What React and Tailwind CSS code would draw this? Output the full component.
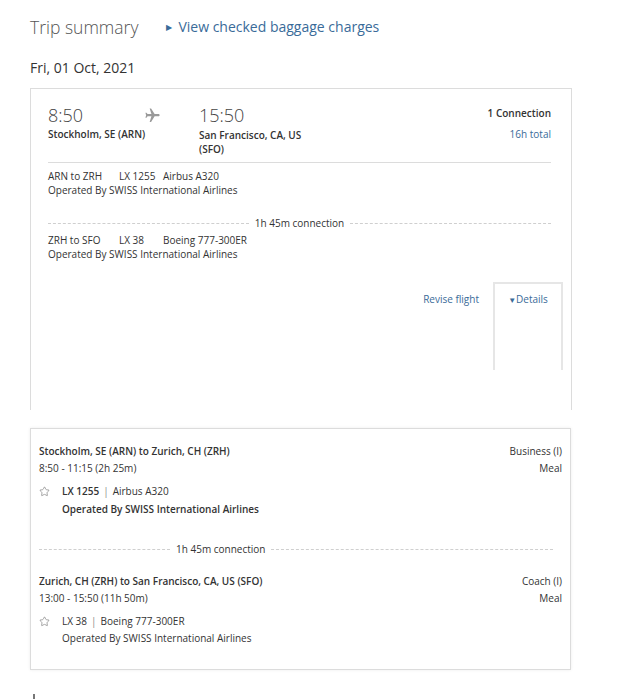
import { Star } from 'lucide-react'

const BLUE = 'text-[#3a6b99]'

function PlaneIcon() {
  return (
    <svg width="17" height="17" viewBox="0 0 24 24" fill="#9a9a9a" style={{ transform: 'rotate(90deg)' }}>
      <path d="M21 16v-2l-8-5V3.5c0-.83-.67-1.5-1.5-1.5S10 2.67 10 3.5V9l-8 5v2l8-2.5V19l-2 1.5V22l3.5-1 3.5 1v-1.5L13 19v-5.5l8 2.5z" />
    </svg>
  )
}

function Connection({ centered = true }) {
  return (
    <div className="flex items-center leading-[14px] text-[#333]">
      <div className={`border-t border-dashed border-[#cfcfcf] ${centered ? 'flex-1' : 'w-[131px]'}`} />
      <span className="px-[6px]">1h 45m connection</span>
      <div className="flex-1 border-t border-dashed border-[#cfcfcf]" />
    </div>
  )
}

function Segment({ title, times, flight, aircraft, cabin, bold }) {
  return (
    <div className="flex justify-between">
      <div>
        <p className="font-semibold leading-[14px]">{title}</p>
        <p className="mt-[3px] leading-[14px]">{times}</p>
        <div className="mt-[9px] flex items-center leading-[14px]">
          <Star size={11} strokeWidth={1.6} className="mr-[12px] text-[#888]" />
          <span className={bold ? 'font-semibold' : 'font-medium'}>{flight}</span>
          <span className="mx-[4px] text-[#888]">|</span>
          <span>{aircraft}</span>
        </div>
        <p className={`${bold ? 'mt-[4px] font-semibold' : 'mt-[3px]'} pl-[23px] leading-[14px]`}>
          Operated By SWISS International Airlines
        </p>
      </div>
      <div className="text-right">
        <p className="leading-[14px]">{cabin}</p>
        <p className="mt-[3px] leading-[14px]">Meal</p>
      </div>
    </div>
  )
}

export default function App() {
  return (
    <div className="min-h-screen bg-white pl-[30px] text-[#333]" style={{ fontFamily: '"Open Sans", "Liberation Sans", sans-serif' }}>
      {/* header */}
      <div className="flex items-center pt-[15px]">
        <h1 className="text-[17.5px] font-light leading-[24px] text-[#555]">Trip summary</h1>
        <a className={`ml-[28px] flex items-center text-[14px] leading-[20px] ${BLUE}`}>
          <span className="mr-[6px] text-[8px]">▶</span>View checked baggage charges
        </a>
      </div>
      <p className="mt-[19px] text-[14px] leading-[20px] text-[#333]">Fri, 01 Oct, 2021</p>

      {/* summary card */}
      <div className="mt-[10px] w-[542px] border-l border-t border-r border-[#dcdcdc] pl-[17px] pr-[20px] pt-[16px] pb-[40px] text-[10px]">
        <div className="flex">
          <div className="w-[151px]">
            <div className="flex items-center">
              <span className="text-[18px] font-light leading-[20px] text-[#444]">8:50</span>
              <span className="ml-auto mr-[38px]"><PlaneIcon /></span>
            </div>
            <p className="mt-[2px] font-semibold leading-[14px]">Stockholm, SE (ARN)</p>
          </div>
          <div className="w-[120px]">
            <span className="text-[18px] font-light leading-[20px] text-[#444]">15:50</span>
            <p className="mt-[2px] font-semibold leading-[14px]">San Francisco, CA, US (SFO)</p>
          </div>
          <div className="ml-auto mt-[1px] text-right">
            <p className="font-semibold leading-[14px]">1 Connection</p>
            <p className={`mt-[7px] leading-[14px] ${BLUE}`}>16h total</p>
          </div>
        </div>
        <div className="mt-[6px] border-t border-[#dcdcdc]" />

        <div className="mt-[6px] flex leading-[14px]">
          <span className="w-[71px]">ARN to ZRH</span>
          <span className="w-[44px]">LX 1255</span>
          <span>Airbus A320</span>
        </div>
        <p className="leading-[14px]">Operated By SWISS International Airlines</p>

        <div className="mt-[19px]"><Connection /></div>

        <div className="mt-[3px] flex leading-[14px]">
          <span className="w-[71px]">ZRH to SFO</span>
          <span className="w-[44px]">LX 38</span>
          <span>Boeing 777-300ER</span>
        </div>
        <p className="leading-[14px]">Operated By SWISS International Airlines</p>

        <div className="mt-[21px] -mr-[12px] flex items-start justify-end">
          <a className={`mt-[10px] mr-[14px] leading-[14px] ${BLUE}`}>Revise flight</a>
          <div className="h-[88px] w-[70px] border-l-2 border-t-2 border-r-2 border-[#e6e6e6] pt-[8px] text-center">
            <a className={`leading-[14px] ${BLUE}`}><span className="text-[8px]">▼</span>Details</a>
          </div>
        </div>
      </div>

      {/* details card */}
      <div className="mt-[18px] w-[541px] border border-[#dcdcdc] px-[8px] pt-[15px] pb-[24px] text-[10px] shadow-[0_0_3px_rgba(0,0,0,0.08)]">
        <Segment
          title="Stockholm, SE (ARN) to Zurich, CH (ZRH)"
          times="8:50 - 11:15 (2h 25m)"
          flight="LX 1255"
          aircraft="Airbus A320"
          cabin="Business (I)"
          bold
        />
        <div className="mt-[26px] mr-[9px]"><Connection centered={false} /></div>
        <div className="mt-[18px]">
          <Segment
            title="Zurich, CH (ZRH) to San Francisco, CA, US (SFO)"
            times="13:00 - 15:50 (11h 50m)"
            flight="LX 38"
            aircraft="Boeing 777-300ER"
            cabin="Coach (I)"
          />
        </div>
      </div>

      <div className="mt-[24px] ml-[3px] h-[5px] w-[2px] bg-[#777]" />
    </div>
  )
}
